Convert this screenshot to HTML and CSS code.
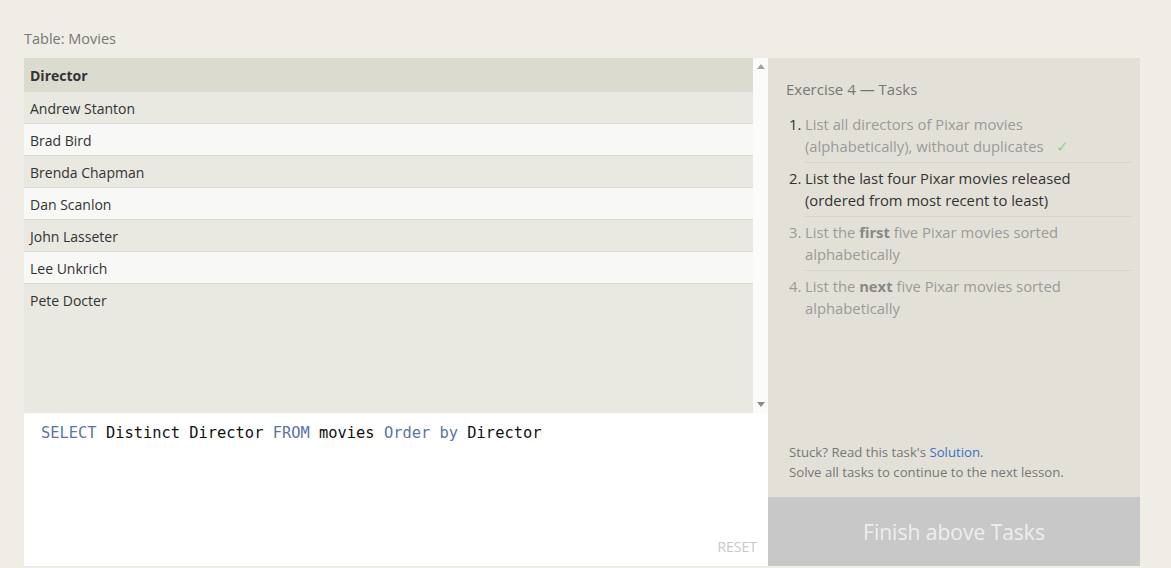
FILE: index.html
```html
<!DOCTYPE html>
<html>
<head>
<meta charset="utf-8">
<link rel="stylesheet" href="styles.css">
</head>
<body>
<div class="page">
  <div class="table-label">Table: Movies</div>
  <div class="workspace">
    <div class="left">
      <div class="results">
        <div class="table">
          <div class="row head">Director</div>
          <div class="row odd">Andrew Stanton</div>
          <div class="row even">Brad Bird</div>
          <div class="row odd">Brenda Chapman</div>
          <div class="row even">Dan Scanlon</div>
          <div class="row odd">John Lasseter</div>
          <div class="row even">Lee Unkrich</div>
          <div class="row odd last">Pete Docter</div>
        </div>
        <div class="scrollbar">
          <span class="arrow up"></span>
          <span class="arrow down"></span>
        </div>
      </div>
      <div class="editor">
        <div class="code"><span class="kw">SELECT</span> Distinct Director <span class="kw">FROM</span> movies <span class="kw">Order</span> <span class="kw">by</span> Director</div>
        <div class="reset">RESET</div>
      </div>
    </div>
    <div class="right">
      <div class="tasks">
        <div class="title">Exercise 4 — Tasks</div>
        <ol class="task-list">
          <li class="done"><span class="num">1.</span><span class="txt">List all directors of Pixar movies (alphabetically), without duplicates <span class="check">✓</span></span></li>
          <li class="active"><span class="num">2.</span><span class="txt">List the last four Pixar movies released (ordered from most recent to least)</span></li>
          <li class="todo"><span class="num">3.</span><span class="txt">List the <b>first</b> five Pixar movies sorted alphabetically</span></li>
          <li class="todo last"><span class="num">4.</span><span class="txt">List the <b>next</b> five Pixar movies sorted alphabetically</span></li>
        </ol>
        <div class="help">
          <div>Stuck? Read this task's <a href="#">Solution</a>.</div>
          <div>Solve all tasks to continue to the next lesson.</div>
        </div>
      </div>
      <div class="finish">Finish above Tasks</div>
    </div>
  </div>
</div>
</body>
</html>
```

FILE: styles.css
```css
* { box-sizing: border-box; }
html, body { margin: 0; padding: 0; }
body {
  background: #efede6;
  font-family: "Open Sans", "Noto Sans", sans-serif;
  color: #333;
}
.page {
  padding: 29px 0 0 24px;
}
.table-label {
  font-size: 14.5px;
  line-height: 20px;
  color: #777;
  height: 29px;
}
.workspace {
  display: flex;
  width: 1116px;
}
.left {
  width: 744px;
  display: flex;
  flex-direction: column;
}
.results {
  height: 355px;
  display: flex;
  background: #e9e8e1;
}
.table {
  flex: 1;
  display: flex;
  flex-direction: column;
}
.row {
  height: 32px;
  padding: 2px 6px 0;
  font-size: 14px;
  line-height: 30px;
  color: #333;
  border-bottom: 1px solid #dcdbd2;
}
.row.head {
  height: 34px;
  line-height: 32px;
  background: #dcdbd0;
  font-weight: bold;
  border-bottom: none;
}
.row.odd { background: #e9e8e1; }
.row.even { background: #f8f8f6; }
.row.last { border-bottom: none; }
.scrollbar {
  width: 15px;
  background: #fbfbfa;
  display: flex;
  flex-direction: column;
  justify-content: space-between;
  align-items: center;
  padding: 6px 0 6px;
}
.arrow {
  width: 0;
  height: 0;
  border-left: 4px solid transparent;
  border-right: 4px solid transparent;
}
.arrow.up { border-bottom: 5px solid #a3a3a3; }
.arrow.down { border-top: 5px solid #8a8a8a; }
.editor {
  height: 153px;
  background: #fff;
  position: relative;
  padding: 10px 17px;
}
.code {
  font-family: "DejaVu Sans Mono", "Liberation Mono", monospace;
  font-size: 15.4px;
  line-height: 20px;
  color: #111;
  white-space: pre;
}
.kw { color: #5a74a8; }
.reset {
  position: absolute;
  right: 11px;
  bottom: 10px;
  font-size: 14px;
  color: #c8c8c8;
}
.right {
  width: 372px;
  display: flex;
  flex-direction: column;
}
.tasks {
  height: 439px;
  background: #e3e1d7;
  padding: 20px 7px 0 18px;
  display: flex;
  flex-direction: column;
}
.title {
  font-size: 15px;
  line-height: 22px;
  color: #777;
  margin-bottom: 13px;
}
.task-list {
  list-style: none;
  margin: 0;
  padding: 0;
}
.task-list li {
  display: flex;
  font-size: 14.8px;
  line-height: 22px;
  padding: 0 0 6px 3px;
  margin-bottom: 4px;
  position: relative;
}
.task-list li::after {
  content: "";
  position: absolute;
  left: 17px;
  right: 0;
  bottom: 0;
  height: 1px;
  background: #d8d6cc;
}
.task-list li.last::after { display: none; }
.num { width: 16px; flex: none; }
.txt { width: 272px; }
.done .num { color: #333; }
.done .txt { color: #9a9a9a; }
.active { color: #333; }
.todo { color: #9a9a9a; }
.todo b { color: #888; }
.check {
  color: #8fcf94;
  margin-left: 9px;
}
.help {
  margin-top: auto;
  padding: 0 0 15px 3px;
  font-size: 13.2px;
  line-height: 20px;
  color: #777;
}
.help a {
  color: #3a6fc4;
  text-decoration: none;
}
.finish {
  height: 69px;
  background: #c8c8c8;
  color: #eeeeee;
  font-size: 21px;
  display: flex;
  align-items: center;
  justify-content: center;
}
```
